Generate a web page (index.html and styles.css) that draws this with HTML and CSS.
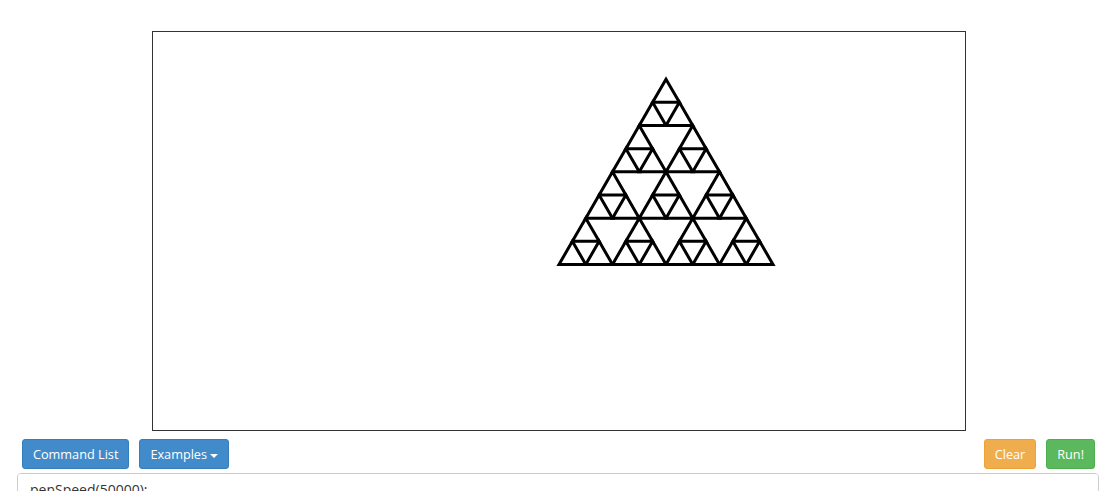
FILE: index.html
```html
<!DOCTYPE html>
<html lang="en">
<head>
    <meta charset="UTF-8">
    <meta name="viewport" content="width=device-width, initial-scale=1.0">
    <title>Turtle Graphics</title>
    <link rel="stylesheet" href="styles.css">
</head>
<body>
    <main id="app">
        <canvas id="board" width="812" height="398"></canvas>

        <div class="controls">
            <div class="left-btns">
                <button class="btn btn-primary">Command List</button>
                <button class="btn btn-primary">Examples <span class="caret"></span></button>
            </div>
            <div class="right-btns">
                <button class="btn btn-warning">Clear</button>
                <button class="btn btn-success">Run!</button>
            </div>
        </div>

        <textarea id="code" class="editor" spellcheck="false">penSpeed(50000);

function block(size) {
    for (var i = 0; i &lt; 3; i++) {
        forward(size);
        left(120);
    }
}

function tri(size, depth) {
    if (depth == 0) {
        block(size);
        return;
    }
    tri(size / 2, depth - 1);
    forward(size / 2);
    tri(size / 2, depth - 1);
    back(size / 2);
    left(60);
    forward(size / 2);
    right(60);
    tri(size / 2, depth - 1);
    left(60);
    back(size / 2);
    right(60);
}

tri(214, 3);</textarea>
    </main>

    <script>
        document.addEventListener('DOMContentLoaded', ()=>{
            const ctx = document.querySelector('#board').getContext('2d');
            const side = 214 / 8;
            const h = side * Math.sqrt(3) / 2;
            const baseY = 232.5;
            const topY = baseY - 8 * h;
            const midX = 513;

            ctx.strokeStyle = '#000';
            ctx.lineWidth = 3;
            ctx.lineJoin = 'miter';

            // grade de blocos 2x2, cada bloco com 3 triangulos
            for(let i = 0; i < 8; i++){
                for(let j = 0; j <= i; j++){
                    if((j & 1) > (i & 1)) continue;
                    const x = midX + (j - i / 2) * side;
                    const y = topY + i * h;
                    ctx.beginPath();
                    ctx.moveTo(x, y);
                    ctx.lineTo(x + side / 2, y + h);
                    ctx.lineTo(x - side / 2, y + h);
                    ctx.closePath();
                    ctx.stroke();
                }
            }
        })
    </script>
</body>
</html>
```

FILE: styles.css
```css
*{
    box-sizing: border-box;
}
html, body{
    margin: 0;
    padding: 0;
    overflow: hidden;
    background-color: #fff;
    font-family: "Open Sans", "Liberation Sans", sans-serif;
}
#app{
    padding: 31px 14px 0 17px;
}
#board{
    display: block;
    margin-left: 135px;
    border: 1px solid #333;
    background-color: #fff;
}
.controls{
    display: flex;
    justify-content: space-between;
    margin-top: 8px;
    padding: 0 4px 0 5px;
}
.left-btns, .right-btns{
    display: flex;
    gap: 10px;
}
.btn{
    font-family: inherit;
    font-size: 12.7px;
    line-height: 18px;
    padding: 5px 10px;
    border: 1px solid transparent;
    border-radius: 3px;
    color: #fff;
    cursor: pointer;
}
.btn-primary{
    background-color: #428bca;
    border-color: #357ebd;
}
.btn-warning{
    background-color: #f0ad4e;
    border-color: #eea236;
}
.btn-success{
    background-color: #5cb85c;
    border-color: #4cae4c;
}
.caret{
    display: inline-block;
    width: 0;
    height: 0;
    vertical-align: middle;
    border-top: 4px solid #fff;
    border-left: 4px solid transparent;
    border-right: 4px solid transparent;
}
.editor{
    display: block;
    width: 100%;
    height: 200px;
    margin-top: 4px;
    padding: 6px 12px;
    border: 1px solid #ccc;
    border-radius: 4px;
    font-family: "Open Sans", "Liberation Sans", sans-serif;
    font-size: 14px;
    line-height: 20px;
    color: #333;
    overflow-y: scroll;
    resize: none;
}
```
